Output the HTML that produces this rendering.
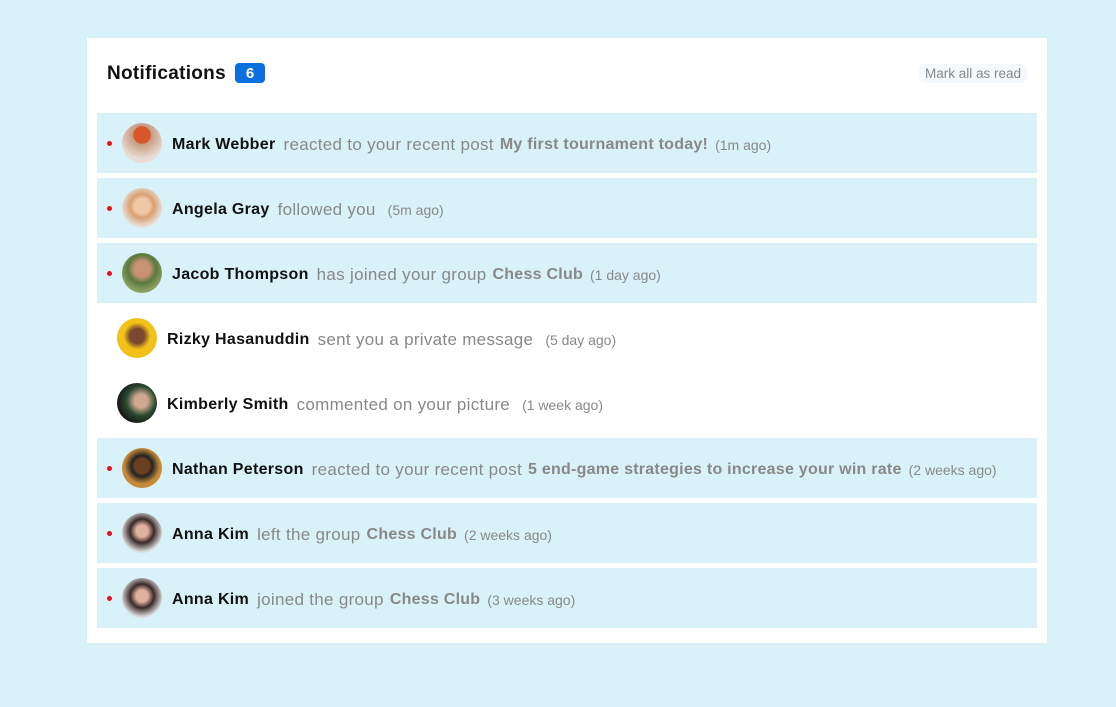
<!DOCTYPE html>
<html><head><meta charset="utf-8"><style>
*{margin:0;padding:0;box-sizing:border-box}
body{width:1116px;height:707px;background:#d9f2f9;font-family:"Liberation Sans",sans-serif;position:relative;overflow:hidden}
.card{position:absolute;left:87px;top:38px;width:960px;height:605px;background:#fff}
.hdr{position:absolute;left:20px;top:25px;font-size:19px;font-weight:bold;color:#111;letter-spacing:0.3px}
.badge{position:absolute;left:148px;top:25px;width:30px;height:20px;background:#0b6fe0;color:#fff;border-radius:4px;font-size:15px;font-weight:bold;text-align:center;line-height:21px}
.mark{position:absolute;right:20px;top:26px;padding:2px 6px;background:#f3f9fd;border-radius:6px;font-size:13.5px;color:#888}
.row{position:absolute;left:10px;width:940px;height:60px;display:flex;align-items:center;font-size:16px;white-space:nowrap}
.row>span:not(.dot):not(.av){position:relative;top:2px}
.row.u{background:#d9f2f9}
.dot{position:absolute;left:10px;top:28px;width:5px;height:5px;border-radius:50%;background:#e0141e}
.av{width:40px;height:40px;border-radius:50%;margin-right:10px;flex:none}
.u .av{margin-left:25px}
.r .av{margin-left:20px}
.n{font-weight:bold;color:#111;margin-right:8px;letter-spacing:0.3px}
.a{color:#888;margin-right:6px;font-size:17px;letter-spacing:0.3px}
.p{color:#888;font-weight:bold;margin-right:5px;letter-spacing:0.25px}
.row>span.t{color:#888;font-size:14px;top:6px;margin-left:2px}
</style></head><body>
<div class="card">
<div class="hdr">Notifications</div><div class="badge">6</div>
<div class="mark">Mark all as read</div>
<div class="row u" style="top:75px"><span class="dot"></span><span class="av" style="background:radial-gradient(circle at 50% 30%,#d9562b 25%,#c49a80 26%,#e8ddd5 70%)"></span><span class="n">Mark Webber</span><span class="a">reacted to your recent post</span><span class="p">My first tournament today!</span><span class="t">(1m ago)</span></div>
<div class="row u" style="top:140px"><span class="dot"></span><span class="av" style="background:radial-gradient(circle at 50% 45%,#f0c8a8 25%,#d9a070 40%,#e6e2de 70%)"></span><span class="n">Angela Gray</span><span class="a">followed you</span><span class="t" style="margin-left:6px">(5m ago)</span></div>
<div class="row u" style="top:205px"><span class="dot"></span><span class="av" style="background:radial-gradient(circle at 50% 40%,#c99272 25%,#5a7a40 45%,#8aa060 70%)"></span><span class="n">Jacob Thompson</span><span class="a">has joined your group</span><span class="p">Chess Club</span><span class="t">(1 day ago)</span></div>
<div class="row r" style="top:270px"><span class="av" style="background:radial-gradient(circle at 50% 45%,#7a4a30 25%,#f2c21a 45%)"></span><span class="n">Rizky Hasanuddin</span><span class="a">sent you a private message</span><span class="t" style="margin-left:6px">(5 day ago)</span></div>
<div class="row r" style="top:335px"><span class="av" style="background:radial-gradient(circle at 60% 45%,#d0a890 20%,#2a4a30 45%,#1a1a1a 70%)"></span><span class="n">Kimberly Smith</span><span class="a">commented on your picture</span><span class="t" style="margin-left:6px">(1 week ago)</span></div>
<div class="row u" style="top:400px"><span class="dot"></span><span class="av" style="background:radial-gradient(circle at 50% 45%,#6a4020 25%,#222 35%,#c58a3a 60%)"></span><span class="n">Nathan Peterson</span><span class="a">reacted to your recent post</span><span class="p">5 end-game strategies to increase your win rate</span><span class="t">(2 weeks ago)</span></div>
<div class="row u" style="top:465px"><span class="dot"></span><span class="av" style="background:radial-gradient(circle at 50% 45%,#e0b0a0 20%,#3a2a28 40%,#ddd 70%)"></span><span class="n">Anna Kim</span><span class="a">left the group</span><span class="p">Chess Club</span><span class="t">(2 weeks ago)</span></div>
<div class="row u" style="top:530px"><span class="dot"></span><span class="av" style="background:radial-gradient(circle at 50% 45%,#e0b0a0 20%,#3a2a28 40%,#ddd 70%)"></span><span class="n">Anna Kim</span><span class="a">joined the group</span><span class="p">Chess Club</span><span class="t">(3 weeks ago)</span></div>
</div>
</body></html>
